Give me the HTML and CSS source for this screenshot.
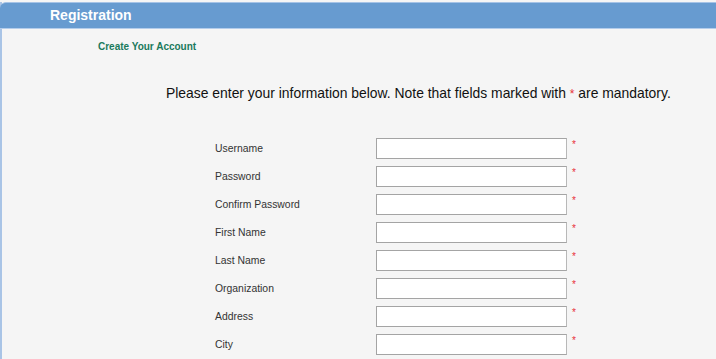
FILE: index.html
```html
<!DOCTYPE html>
<html lang="en">
<head>
    <meta charset="UTF-8">
    <title>Registration</title>
    <link rel="stylesheet" href="styles.css">
</head>
<body>
    <div class="page">
        <div class="header">Registration</div>
        <div class="content">
            <div class="subtitle">Create Your Account</div>
            <p class="intro">Please enter your information below. Note that fields marked with <span class="req">*</span> are mandatory.</p>
            <div class="form">
                <label>Username</label><input type="text"><span class="req">*</span>
                <label>Password</label><input type="password"><span class="req">*</span>
                <label>Confirm Password</label><input type="password"><span class="req">*</span>
                <label>First Name</label><input type="text"><span class="req">*</span>
                <label>Last Name</label><input type="text"><span class="req">*</span>
                <label>Organization</label><input type="text"><span class="req">*</span>
                <label>Address</label><input type="text"><span class="req">*</span>
                <label>City</label><input type="text"><span class="req">*</span>
            </div>
        </div>
    </div>
</body>
</html>
```

FILE: styles.css
```css
body {
    margin: 0;
    padding: 0;
    font-family: "Liberation Sans", Arial, sans-serif;
    background-color: #f5f5f5;
}

.page {
    margin-top: 2px;
    border-left: 2px solid #a9c4e6;
    min-height: 357px;
}

.header {
    height: 25px;
    line-height: 25px;
    background-color: #679bd0;
    border-top: 1px solid #a6c3e6;
    border-bottom: 1px solid #b4cdeb;
    border-top-left-radius: 6px;
    margin-left: -2px;
    padding-left: 50px;
    color: #fff;
    font-weight: bold;
    font-size: 14px;
}

.content {
    padding-top: 11px;
}

.subtitle {
    margin-left: 96px;
    color: #1b7a5c;
    font-weight: bold;
    font-size: 10px;
    line-height: 14px;
}

.intro {
    margin: 31px 0 0 164px;
    font-size: 13.9px;
    line-height: 16px;
    color: #111;
}

.intro .req {
    font-size: 12px;
}

.req {
    color: #e8303a;
}

.form {
    display: grid;
    grid-template-columns: 161px 191px auto;
    grid-auto-rows: 28px;
    align-items: center;
    margin: 32px 0 0 213px;
}

.form label {
    font-size: 10.4px;
    color: #333;
}

.form input {
    box-sizing: border-box;
    width: 191px;
    height: 21px;
    margin: 0;
    border: 1px solid #a4a4a4;
    border-right-color: #b8b8b8;
    background: #fff;
}

.form .req {
    font-size: 10px;
    margin-left: 5px;
    align-self: start;
    margin-top: 5px;
}
```
